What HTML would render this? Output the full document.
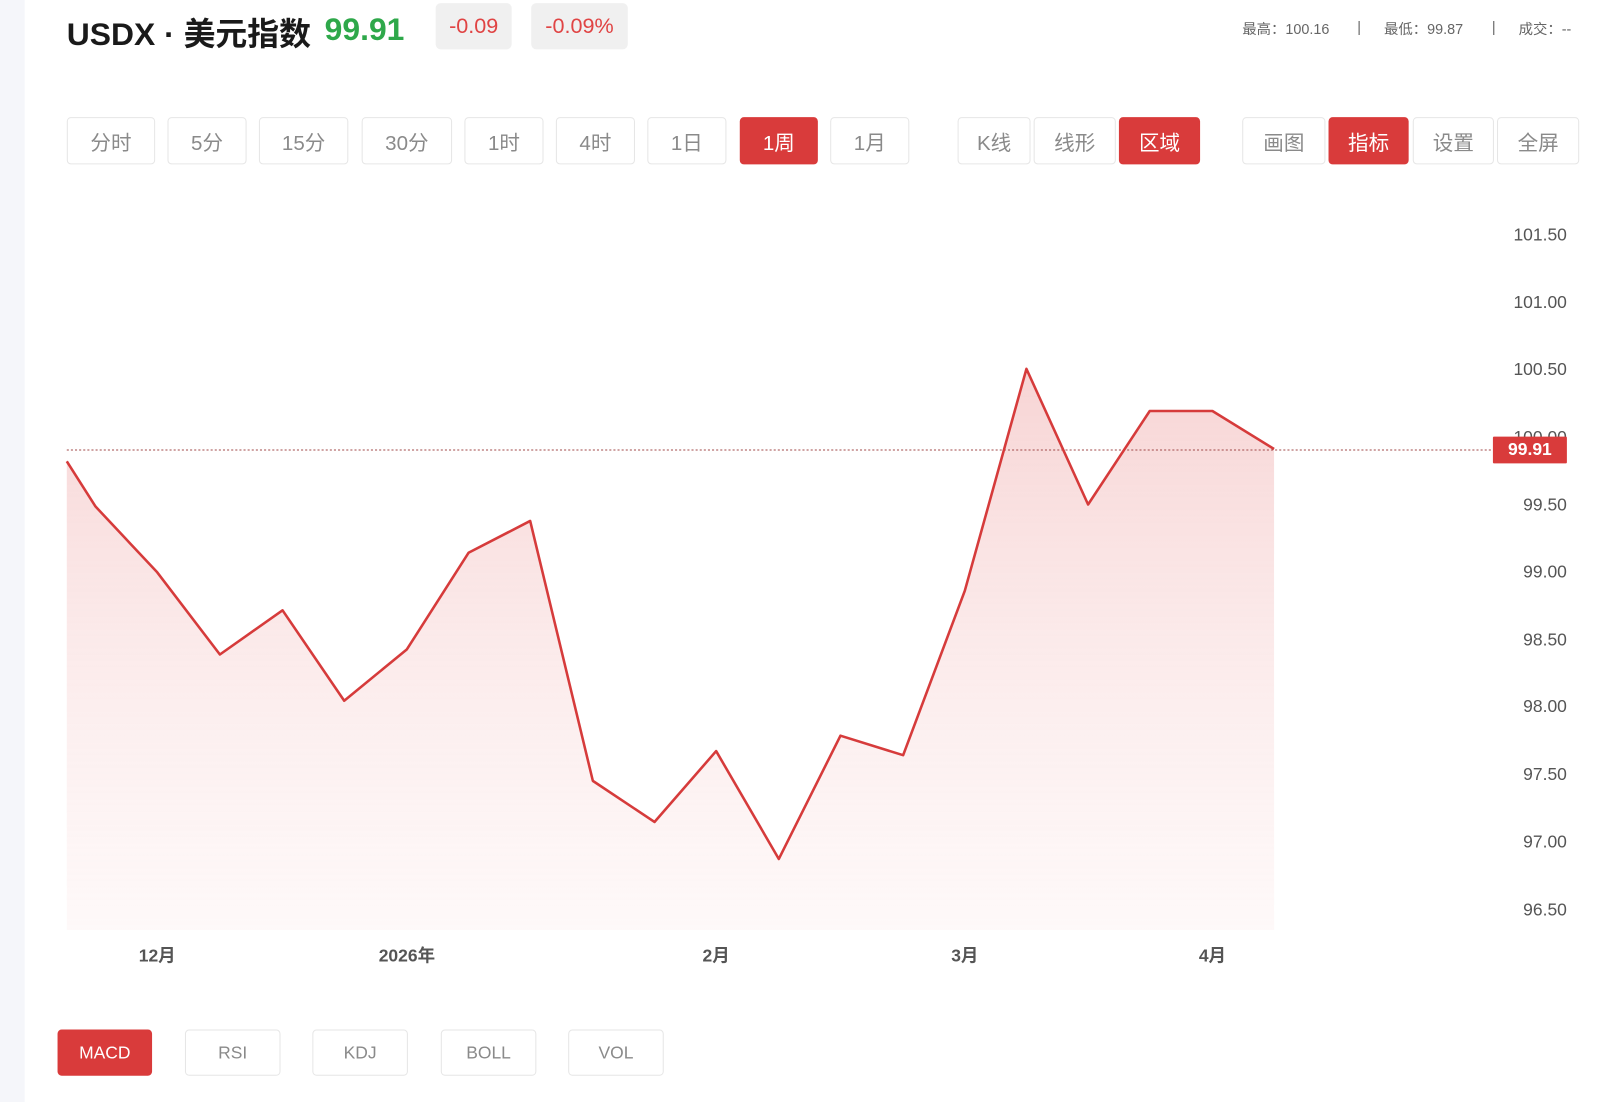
<!DOCTYPE html>
<html><head><meta charset="utf-8"><style>
html,body{margin:0;padding:0;background:#fff;width:1612px;height:1102px;overflow:hidden}
#w{position:absolute;left:0;top:0;width:1569px;height:1073px;transform:scale(1.02747);transform-origin:0 0;font-family:"Liberation Sans","Noto Sans CJK SC",sans-serif}
.a{position:absolute}
.bar{left:0;top:0;width:24px;height:1073px;background:#f5f6fa}
.b{position:absolute;box-sizing:border-box;border:1px solid #e6e6e6;border-radius:4px;color:#8a8a8a;font-size:20px;display:flex;align-items:center;justify-content:center;background:#fff}
.r{background:#d93b3b;border-color:#d93b3b;color:#fff}
.t{top:114px;height:46px}
.s{top:1002px;height:45px;font-size:17px}
.y{position:absolute;right:44px;font-size:17px;color:#555;transform:translateY(-50%)}
.x{position:absolute;top:916px;font-size:17px;color:#555;font-weight:bold;transform:translateX(-50%)}
.st{position:absolute;top:18px;font-size:14px;color:#666;white-space:pre}
</style></head><body><div id="w">
<div class="a bar"></div>
<div class="a" style="left:65px;top:8px;font-size:31px;font-weight:bold;color:#1a1a1a">USDX · 美元指数</div>
<div class="a" style="left:316px;top:11px;font-size:31px;font-weight:bold;color:#2ea84a">99.91</div>
<div class="a" style="left:424px;top:3px;width:74px;height:45px;background:#f0f0f0;border-radius:5px;color:#e04444;font-size:21px;display:flex;align-items:center;justify-content:center">-0.09</div>
<div class="a" style="left:517px;top:3px;width:94px;height:45px;background:#f0f0f0;border-radius:5px;color:#e04444;font-size:21px;display:flex;align-items:center;justify-content:center">-0.09%</div>
<div class="st" style="left:1209px">最高：100.16</div>
<div class="st" style="left:1321px">|</div>
<div class="st" style="left:1347px">最低：99.87</div>
<div class="st" style="left:1452px">|</div>
<div class="st" style="left:1478px">成交：--</div>

<div class="b t" style="left:65px;width:86px">分时</div>
<div class="b t" style="left:163px;width:77px">5分</div>
<div class="b t" style="left:252px;width:87px">15分</div>
<div class="b t" style="left:352px;width:88px">30分</div>
<div class="b t" style="left:452px;width:77px">1时</div>
<div class="b t" style="left:541px;width:77px">4时</div>
<div class="b t" style="left:630px;width:77px">1日</div>
<div class="b t r" style="left:720px;width:76px">1周</div>
<div class="b t" style="left:808px;width:77px">1月</div>
<div class="b t" style="left:932px;width:71px">K线</div>
<div class="b t" style="left:1006px;width:80px">线形</div>
<div class="b t r" style="left:1089px;width:79px">区域</div>
<div class="b t" style="left:1209px;width:81px">画图</div>
<div class="b t r" style="left:1293px;width:78px">指标</div>
<div class="b t" style="left:1375px;width:79px">设置</div>
<div class="b t" style="left:1457px;width:80px">全屏</div>

<svg class="a" style="left:0;top:0" width="1569" height="1073">
<defs><linearGradient id="g" x1="0" y1="0" x2="0" y2="1"><stop offset="0" stop-color="#f2b8b8" stop-opacity=".6"/><stop offset="1" stop-color="#fbe6e6" stop-opacity=".25"/></linearGradient></defs>
<path d="M65,449 L93,493 L153,557 L214,637 L275,594 L335,682 L396,632 L456,538 L516,507 L577,760 L637,800 L697,731 L758,836 L818,716 L879,735 L939,575 L999,359 L1059,491 L1119,400 L1180,400 L1240,437 L1240,905 L65,905 Z" fill="url(#g)"/>
<line x1="65" y1="438" x2="1453" y2="438" stroke="#a04848" stroke-width="1" stroke-dasharray="2,2"/>
<path d="M65,449 L93,493 L153,557 L214,637 L275,594 L335,682 L396,632 L456,538 L516,507 L577,760 L637,800 L697,731 L758,836 L818,716 L879,735 L939,575 L999,359 L1059,491 L1119,400 L1180,400 L1240,437" fill="none" stroke="#d63b3b" stroke-width="2.5" stroke-linejoin="round"/>
</svg>
<div class="y" style="top:229px">101.50</div>
<div class="y" style="top:295px">101.00</div>
<div class="y" style="top:360px">100.50</div>
<div class="y" style="top:426px">100.00</div>
<div class="y" style="top:492px">99.50</div>
<div class="y" style="top:557px">99.00</div>
<div class="y" style="top:623px">98.50</div>
<div class="y" style="top:688px">98.00</div>
<div class="y" style="top:754px">97.50</div>
<div class="y" style="top:820px">97.00</div>
<div class="y" style="top:886px">96.50</div>
<div class="a" style="left:1453px;top:425px;width:72px;height:26px;background:#d93b3b;color:#fff;font-weight:bold;font-size:17px;display:flex;align-items:center;justify-content:center;border-radius:1px">99.91</div>
<div class="x" style="left:153px">12月</div>
<div class="x" style="left:396px">2026年</div>
<div class="x" style="left:697px">2月</div>
<div class="x" style="left:939px">3月</div>
<div class="x" style="left:1180px">4月</div>

<div class="b s r" style="left:56px;width:92px">MACD</div>
<div class="b s" style="left:180px;width:93px">RSI</div>
<div class="b s" style="left:304px;width:93px">KDJ</div>
<div class="b s" style="left:429px;width:93px">BOLL</div>
<div class="b s" style="left:553px;width:93px">VOL</div>
</div></body></html>
